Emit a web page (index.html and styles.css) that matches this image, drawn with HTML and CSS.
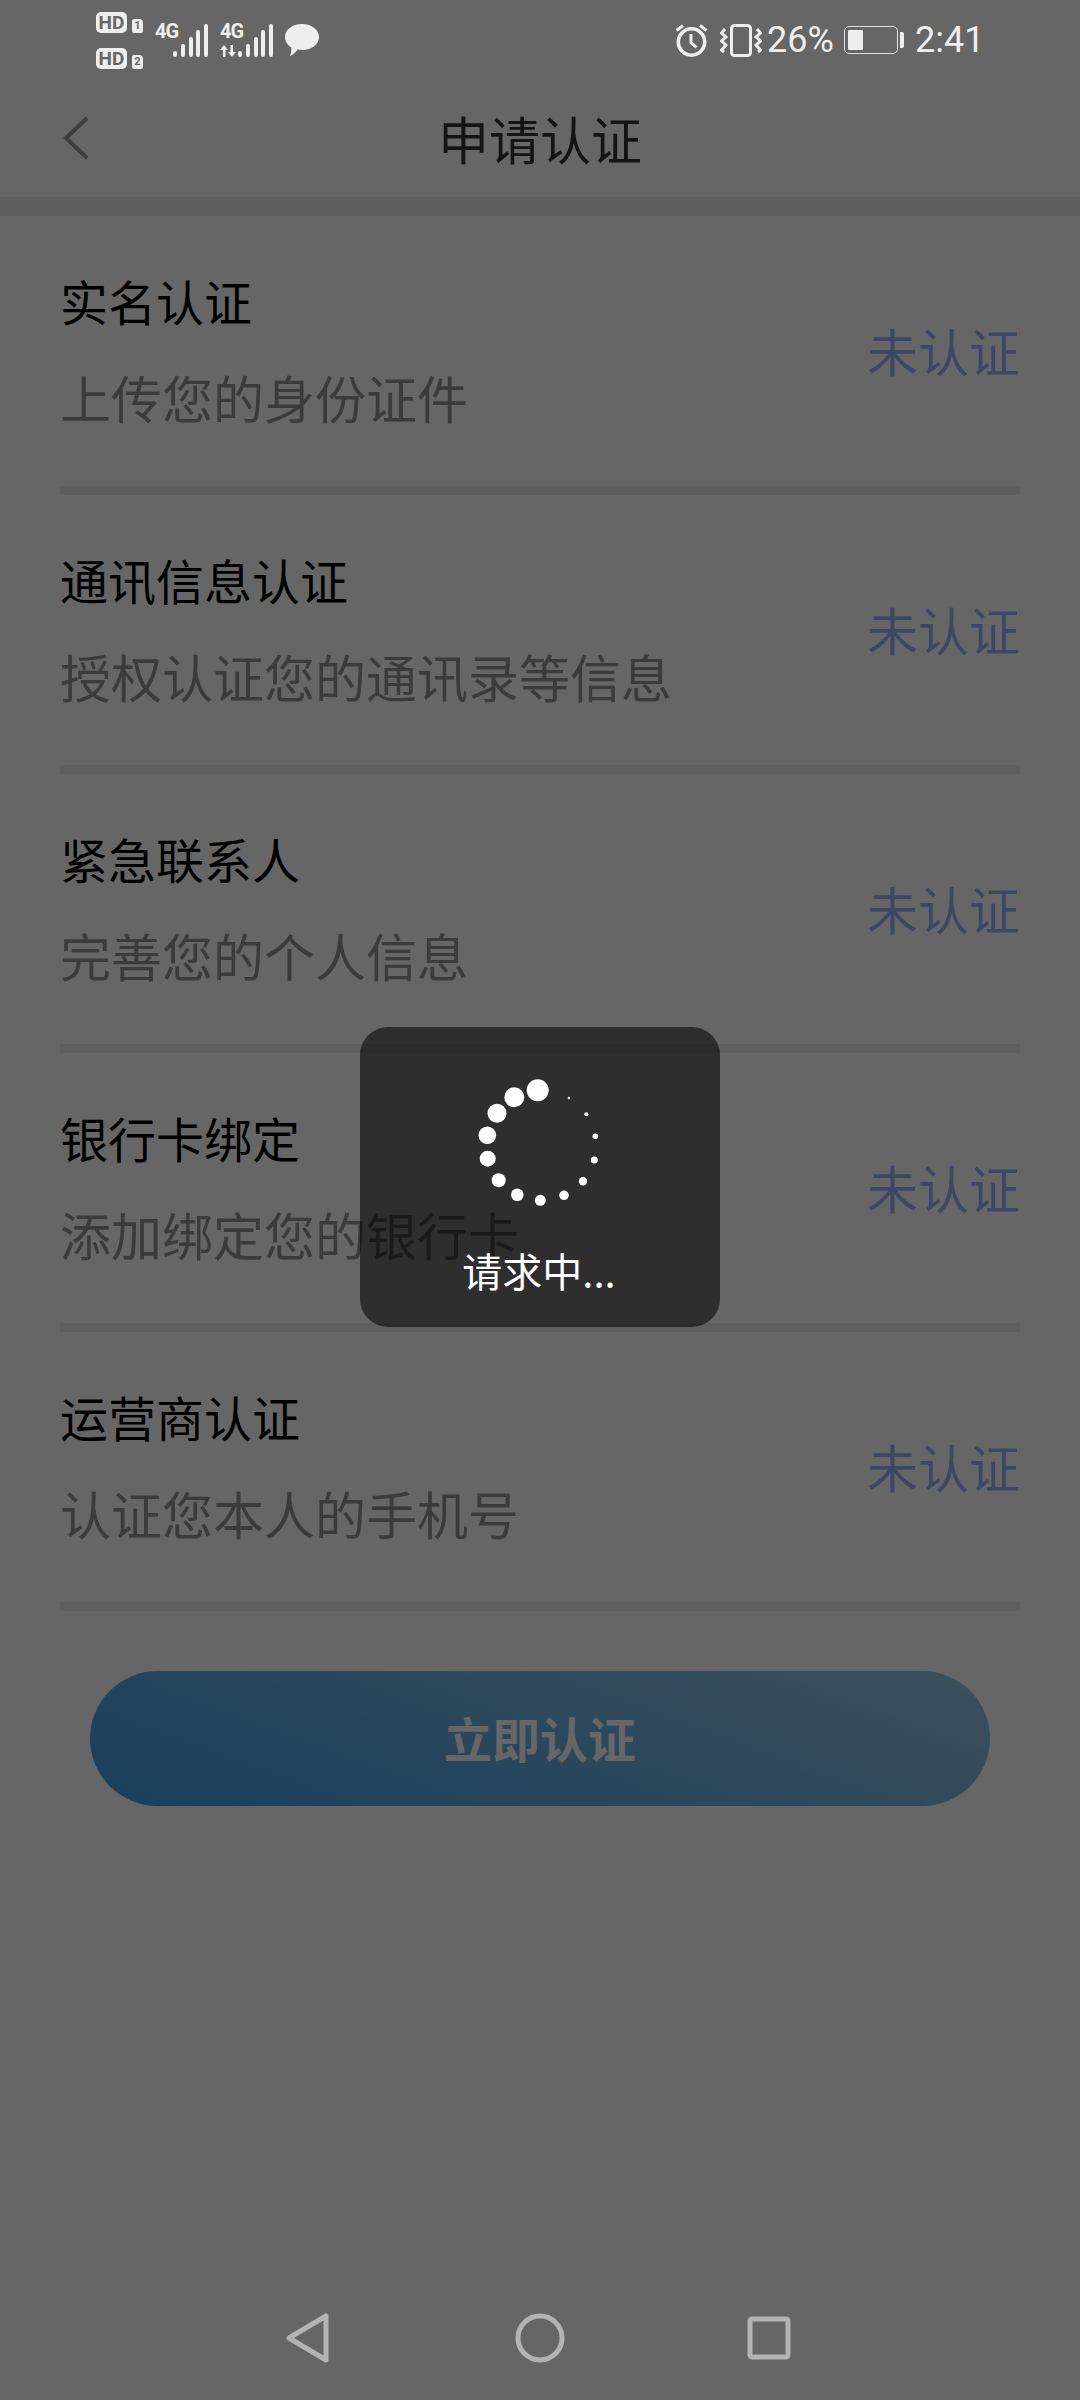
FILE: index.html
```html
<!DOCTYPE html>
<html lang="zh-CN">
<head>
    <meta charset="UTF-8">
    <meta name="viewport" content="width=device-width, initial-scale=1.0">
    <title>申请认证</title>
    <link rel="stylesheet" href="styles.css">
</head>
<body>
    <div class="page">
        <div class="status-bar">
            <div class="hd-stack">
                <div class="sim"><span class="hd">HD</span><span class="sim-no">1</span></div>
                <div class="sim"><span class="hd">HD</span><span class="sim-no">2</span></div>
            </div>
            <div class="signal">
                <div class="net"><span class="net-name">4G</span></div>
                <svg class="bars" width="35" height="33" viewBox="0 0 35 33">
                    <rect x="0" y="27" width="4" height="6" rx="2"/>
                    <rect x="8" y="20" width="4" height="13" rx="2"/>
                    <rect x="16" y="13" width="4" height="20" rx="2"/>
                    <rect x="23" y="6" width="4" height="27" rx="2"/>
                    <rect x="31" y="0" width="4" height="33" rx="2"/>
                </svg>
            </div>
            <div class="signal">
                <div class="net">
                    <span class="net-name">4G</span>
                    <svg class="arrows" width="16" height="12" viewBox="0 0 16 12">
                        <path d="M0 5 L4 0 L8 5 H5.5 V12 H3 V5 Z"/>
                        <path d="M8 7 L12 12 L16 7 H13 V0 H10.5 V7 Z"/>
                    </svg>
                </div>
                <svg class="bars" width="35" height="33" viewBox="0 0 35 33">
                    <rect x="0" y="27" width="4" height="6" rx="2"/>
                    <rect x="8" y="20" width="4" height="13" rx="2"/>
                    <rect x="16" y="13" width="4" height="20" rx="2"/>
                    <rect x="23" y="6" width="4" height="27" rx="2"/>
                    <rect x="31" y="0" width="4" height="33" rx="2"/>
                </svg>
            </div>
            <svg class="msg" width="34" height="32" viewBox="0 0 34 32">
                <path d="M17 0 C27 0 34 6 34 13 C34 20 27 26 17 26 C15.500 26 14 25.800 12.500 25.500 C10.500 28.500 8 31 5 32 C6 29.500 6.500 26.500 6.300 23.500 C2.500 21 0 17.500 0 13 C0 6 7 0 17 0 Z"/>
            </svg>
            <div class="spacer"></div>
            <svg class="alarm" width="33" height="33" viewBox="0 0 33 33" fill="none">
                <circle cx="16.500" cy="18" r="13.200" stroke-width="3.600"/>
                <path d="M16 10 V18.500 L21.500 23.500" stroke-width="3"/>
                <path d="M1.500 6.500 L8 1.500 M31.500 6.500 L25 1.500" stroke-width="3"/>
            </svg>
            <svg class="vibrate" width="42" height="33" viewBox="0 0 42 33" fill="none">
                <rect x="11.500" y="1.500" width="19" height="30" rx="3" stroke-width="3"/>
                <path d="M5 5 L1.500 9 L6 13 L1.500 17 L6 21 L1.500 26 L4 28" stroke-width="3"/>
                <path d="M37 5 L40.500 9 L36 13 L40.500 17 L36 21 L40.500 26 L38 28" stroke-width="3"/>
            </svg>
            <span class="percent">26%</span>
            <div class="battery">
                <div class="battery-body"><div class="battery-fill"></div></div>
                <div class="battery-nub"></div>
            </div>
            <span class="clock">2:41</span>
        </div>

        <div class="top-bar">
            <svg class="back" width="26" height="44" viewBox="0 0 26 44" fill="none">
                <path d="M24 2 L3 22 L24 42" />
            </svg>
            <h1>申请认证</h1>
        </div>

        <div class="band"></div>

        <div class="list">
            <div class="item">
                <div class="item-text">
                    <div class="item-title">实名认证</div>
                    <div class="item-desc">上传您的身份证件</div>
                </div>
                <div class="item-state">未认证</div>
            </div>
            <div class="item">
                <div class="item-text">
                    <div class="item-title">通讯信息认证</div>
                    <div class="item-desc">授权认证您的通讯录等信息</div>
                </div>
                <div class="item-state">未认证</div>
            </div>
            <div class="item">
                <div class="item-text">
                    <div class="item-title">紧急联系人</div>
                    <div class="item-desc">完善您的个人信息</div>
                </div>
                <div class="item-state">未认证</div>
            </div>
            <div class="item">
                <div class="item-text">
                    <div class="item-title">银行卡绑定</div>
                    <div class="item-desc">添加绑定您的银行卡</div>
                </div>
                <div class="item-state">未认证</div>
            </div>
            <div class="item">
                <div class="item-text">
                    <div class="item-title">运营商认证</div>
                    <div class="item-desc">认证您本人的手机号</div>
                </div>
                <div class="item-state">未认证</div>
            </div>
        </div>

        <button class="submit" type="button">立即认证</button>

        <div class="nav-bar">
            <svg class="key-back" width="44" height="50" viewBox="0 0 44 50" fill="none">
                <path d="M40 3 V47 L3 25 Z"/>
            </svg>
            <svg class="key-home" width="50" height="50" viewBox="0 0 50 50" fill="none">
                <circle cx="25" cy="25" r="22"/>
            </svg>
            <svg width="44" height="44" viewBox="0 0 44 44" fill="none">
                <rect x="3" y="3" width="38" height="38" rx="2"/>
            </svg>
        </div>

        <div class="overlay">
            <div class="loading">
                <svg class="spinner" width="140" height="140" viewBox="0 0 140 140">
                    <circle cx="67.7" cy="20.3" r="11"/>
                    <circle cx="44.3" cy="27.3" r="10"/>
                    <circle cx="27" cy="43.3" r="9.500"/>
                    <circle cx="17.3" cy="65.3" r="8.800"/>
                    <circle cx="17.7" cy="88.7" r="8"/>
                    <circle cx="28.7" cy="110.3" r="7"/>
                    <circle cx="47.3" cy="124.7" r="6.300"/>
                    <circle cx="70.3" cy="130.3" r="5.500"/>
                    <circle cx="94" cy="125.3" r="4.800"/>
                    <circle cx="113" cy="111.3" r="4.200"/>
                    <circle cx="124.3" cy="90" r="3.500"/>
                    <circle cx="125.3" cy="66.3" r="2.800"/>
                    <circle cx="116.3" cy="44.3" r="2"/>
                    <circle cx="99" cy="28" r="1.300"/>
                </svg>
                <div class="loading-text">请求中...</div>
            </div>
        </div>
    </div>
</body>
</html>
```

FILE: styles.css
```css
* {
    box-sizing: border-box;
}
body {
    margin: 0;
    background: #fff;
    font-family: "Noto Sans CJK SC", "Noto Sans", sans-serif;
}
.page {
    position: relative;
    width: 1080px;
    height: 2400px;
    display: flex;
    flex-direction: column;
    overflow: hidden;
}

/* status bar */
.status-bar {
    position: relative;
    z-index: 2;
    height: 80px;
    padding: 0 102px 0 96px;
    display: flex;
    align-items: center;
    color: #eee;
    font-family: Roboto, sans-serif;
}
.hd-stack {
    width: 47px;
    margin-right: 12px;
    display: flex;
    flex-direction: column;
    gap: 15px;
}
.sim {
    display: flex;
    align-items: flex-end;
    gap: 5px;
}
.hd {
    width: 31px;
    height: 21px;
    border-radius: 5px;
    background: #eee;
    color: #666;
    font-size: 19px;
    font-weight: 700;
    line-height: 21px;
    text-align: center;
}
.sim-no {
    width: 11px;
    height: 14px;
    border-radius: 2px 4px 2px 2px;
    background: #eee;
    color: #666;
    font-size: 11px;
    font-weight: 700;
    line-height: 14px;
    text-align: center;
}
.signal {
    height: 33px;
    margin-right: 12px;
    display: flex;
    align-items: flex-start;
}
.net {
    width: 18px;
    display: flex;
    flex-direction: column;
    gap: 6px;
}
.net-name {
    display: block;
    height: 15px;
    font-family: "Liberation Sans Narrow", Roboto, sans-serif;
    font-size: 20px;
    font-weight: 700;
    line-height: 15px;
    letter-spacing: -1px;
}
.bars, .arrows, .msg {
    fill: #eee;
}
.alarm, .vibrate {
    stroke: #eee;
}
.alarm {
    margin-right: 12px;
}
.vibrate {
    margin-right: 5px;
}
.spacer {
    flex: 1;
}
.percent, .clock {
    font-size: 36px;
    line-height: 40px;
}
.percent {
    width: 67px;
    margin-right: 10px;
}
.clock {
    width: 63px;
    margin-left: 11px;
}
.battery {
    display: flex;
    align-items: center;
    gap: 2px;
}
.battery-body {
    width: 54px;
    height: 28px;
    padding: 3px;
    border: 1.5px solid #ddd;
    border-radius: 5px;
}
.battery-fill {
    width: 15px;
    height: 100%;
    background: #eee;
    border-radius: 1px;
}
.battery-nub {
    width: 4px;
    height: 16px;
    background: #eee;
    border-radius: 0 2px 2px 0;
}

/* title */
.top-bar {
    height: 117px;
    padding: 0 0 2px 63px;
    display: flex;
    align-items: center;
    position: relative;
}
.back {
    stroke: #999;
    stroke-width: 4;
}
.top-bar h1 {
    position: absolute;
    left: 0;
    right: 0;
    margin: 0;
    text-align: center;
    font-size: 51px;
    font-weight: 400;
    line-height: 60px;
    color: #333;
}
.band {
    height: 19px;
    background: #eee;
}

/* list */
.list {
    padding: 0 60px;
}
.item {
    height: 279px;
    border-bottom: 9px solid #eee;
    display: flex;
    justify-content: space-between;
    align-items: center;
}
.item-text {
    padding-bottom: 6px;
}
.item-title {
    font-size: 48px;
    line-height: 60px;
    color: #000;
}
.item-desc {
    margin-top: 37px;
    font-size: 51px;
    line-height: 60px;
    color: #949494;
}
.item-state {
    padding-bottom: 2px;
    font-size: 51px;
    line-height: 60px;
    color: #9cb0ff;
}
.submit {
    display: block;
    width: 900px;
    height: 135px;
    margin: 60px 0 0 90px;
    padding: 0 0 4px;
    border: none;
    border-radius: 68px;
    background: linear-gradient(20deg, #3f9fe8, #98c4e6);
    color: #fff;
    font-family: inherit;
    font-size: 48px;
    font-weight: 700;
}

/* nav keys */
.nav-bar {
    position: relative;
    z-index: 2;
    height: 78px;
    margin-top: auto;
    margin-bottom: 23px;
    padding-left: 286px;
    display: flex;
    align-items: center;
}
.nav-bar svg {
    stroke: #b3b3b3;
    stroke-width: 5;
    stroke-linejoin: round;
}
.key-back {
    margin-right: 185px;
}
.key-home {
    margin-right: 182px;
}

/* request dialog */
.overlay {
    position: absolute;
    top: 0;
    right: 0;
    bottom: 0;
    left: 0;
    z-index: 1;
    background: rgba(0, 0, 0, 0.6);
    display: flex;
    justify-content: center;
    align-items: flex-start;
    padding-top: 1027px;
}
.loading {
    width: 360px;
    height: 300px;
    padding-top: 43px;
    border-radius: 28px;
    background: rgba(0, 0, 0, 0.55);
    display: flex;
    flex-direction: column;
    align-items: center;
}
.spinner {
    fill: #fff;
}
.loading-text {
    margin-top: 30px;
    padding-right: 2px;
    font-size: 40px;
    line-height: 60px;
    color: #fff;
}
```
